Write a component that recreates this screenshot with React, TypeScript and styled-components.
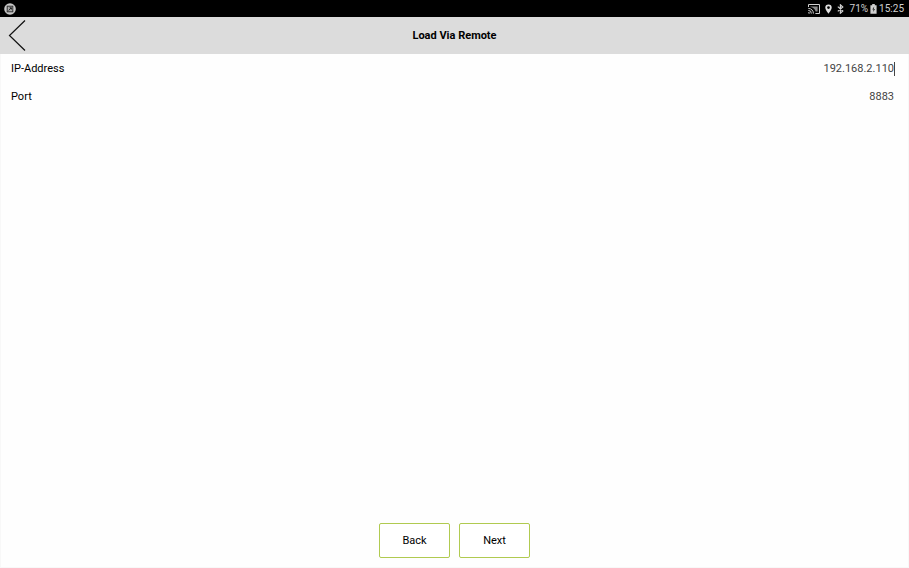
import React, { useState } from 'react';
import styled, { createGlobalStyle } from 'styled-components';

const GlobalStyle = createGlobalStyle`
  *, *::before, *::after { box-sizing: border-box; }
  body { margin: 0; background: #fefefe; font-family: Roboto, "Liberation Sans", sans-serif; color: #000; }
`;

const Screen = styled.div`
  display: flex;
  flex-direction: column;
  min-height: 100vh;
  border: solid #f8f8f8;
  border-width: 0 1px 1px;
`;

const StatusBar = styled.div`
  display: flex;
  align-items: center;
  justify-content: space-between;
  height: 17px;
  margin: 0 -1px;
  padding: 0 5px 0 4px;
  background: #000;
  color: #d0d0d0;
  font-size: 10px;
  line-height: 17px;
  svg { display: block; }
`;

const StatusGroup = styled.div`
  display: flex;
  align-items: center;
`;

const StatusIcon = styled.svg<{ $gap?: number }>`
  flex: none;
  margin-right: ${({ $gap = 0 }) => $gap}px;
`;

const StatusText = styled.span<{ $gap?: number }>`
  margin-right: ${({ $gap = 0 }) => $gap}px;
`;

const Header = styled.header`
  display: grid;
  grid-template-columns: 40px 1fr 40px;
  align-items: center;
  height: 37px;
  margin: 0 -1px;
  background: #dcdcdc;
`;

const BackArrow = styled.button`
  display: block;
  width: 36px;
  height: 37px;
  padding: 0;
  border: 0;
  background: none;
  cursor: pointer;
  svg { display: block; }
`;

const Title = styled.h1`
  margin: 0;
  font-size: 11px;
  line-height: 16px;
  font-weight: 700;
  text-align: center;
  color: #000;
`;

const Form = styled.form`
  display: flex;
  flex: 1;
  flex-direction: column;
  padding-top: 1px;
`;

const Field = styled.div`
  display: flex;
  align-items: center;
  height: 28px;
  padding: 0 13px 0 10px;
`;

const Label = styled.label`
  font-size: 11px;
  line-height: 16px;
`;

const Input = styled.input`
  flex: 1;
  min-width: 0;
  height: 20px;
  padding: 0;
  border: 0;
  outline: none;
  background: none;
  color: #444;
  font: 11px/20px Roboto, "Liberation Sans", sans-serif;
  text-align: right;
`;

const Caret = styled.span<{ $visible: boolean }>`
  width: 1px;
  height: 14px;
  background: ${({ $visible }) => ($visible ? '#444' : 'transparent')};
`;

const Actions = styled.footer`
  display: flex;
  justify-content: center;
  gap: 9px;
  margin-top: auto;
  padding-bottom: 9px;
`;

const ActionButton = styled.button`
  width: 71px;
  height: 35px;
  padding: 0;
  border: 1px solid #b0ca50;
  border-radius: 2px;
  background: #fff;
  color: #000;
  font: 11px/17px Roboto, "Liberation Sans", sans-serif;
  cursor: pointer;
`;

function AppBadge() {
  return (
    <StatusIcon width="12" height="12" viewBox="0 0 12 12" aria-hidden="true">
      <circle cx="6" cy="6" r="5.8" fill="#c8c8c8" />
      <rect x="3.2" y="3.2" width="5.6" height="5.6" fill="#aaa" stroke="#333" strokeWidth="1" />
      <path d="M4.7 7.5 7.2 4.8M5.6 4.8h1.8v1.7" fill="none" stroke="#222" strokeWidth="1" />
    </StatusIcon>
  );
}

function CastIcon() {
  return (
    <StatusIcon $gap={5} width="12" height="10" viewBox="0 0 12 10" aria-hidden="true">
      <path d="M.5 3V.5h11v9H7.4" fill="none" stroke="#d0d0d0" strokeWidth="1" />
      <path d="M2.4 2.4h7.2v5.2H7.6C7 5 5.2 3.3 2.4 3z" fill="#8c8c8c" />
      <path d="M.3 4.4A5 5 0 0 1 5.4 9.6M.3 6.4a3 3 0 0 1 3 3.2" fill="none" stroke="#d0d0d0" strokeWidth="1" />
      <path d="M.3 8v1.6H2A1.6 1.6 0 0 0 .3 8z" fill="#d0d0d0" />
    </StatusIcon>
  );
}

function PinIcon() {
  return (
    <StatusIcon $gap={5} width="7" height="10" viewBox="0 0 7 10" aria-hidden="true">
      <path
        d="M3.5.4A3.2 3.2 0 0 0 .3 3.6C.3 6 3.5 9.8 3.5 9.8S6.7 6 6.7 3.6A3.2 3.2 0 0 0 3.5.4zm0 1.8a1.4 1.4 0 1 1 0 2.8 1.4 1.4 0 0 1 0-2.8z"
        fill="#e0e0e0"
        fillRule="evenodd"
      />
    </StatusIcon>
  );
}

function BluetoothIcon() {
  return (
    <StatusIcon $gap={6} width="7" height="10" viewBox="0 0 7 10" aria-hidden="true">
      <path d="M.8 2.6 5.8 7 3.4 9.2V.8l2.4 2.2L.8 7.4" fill="none" stroke="#d0d0d0" strokeWidth="1.2" />
    </StatusIcon>
  );
}

function BatteryIcon() {
  return (
    <StatusIcon $gap={2} width="7" height="10" viewBox="0 0 7 10" aria-hidden="true">
      <path d="M2.2 0h2.6v1.2h1.8v8.6H.4V1.2h1.8z" fill="#d0d0d0" />
      <path d="M4.2 2.6 2.2 5.6h1.2L3.2 8l1.9-3H3.9z" fill="#333" />
    </StatusIcon>
  );
}

export default function App() {
  const [address, setAddress] = useState('192.168.2.110');
  const [port, setPort] = useState('8883');

  return (
    <Screen>
      <GlobalStyle />
      <StatusBar>
        <AppBadge />
        <StatusGroup>
          <CastIcon />
          <PinIcon />
          <BluetoothIcon />
          <StatusText $gap={2}>71%</StatusText>
          <BatteryIcon />
          <StatusText>15:25</StatusText>
        </StatusGroup>
      </StatusBar>
      <Header>
        <BackArrow type="button" aria-label="Go back">
          <svg width="36" height="37" viewBox="0 0 36 37" aria-hidden="true">
            <path d="M25 3.5 9.5 18.5 25 33.5" fill="none" stroke="#111" strokeWidth="1.2" />
          </svg>
        </BackArrow>
        <Title>Load Via Remote</Title>
      </Header>
      <Form onSubmit={(event) => event.preventDefault()}>
        <Field>
          <Label htmlFor="address">IP-Address</Label>
          <Input id="address" value={address} onChange={(event) => setAddress(event.target.value)} />
          <Caret $visible />
        </Field>
        <Field>
          <Label htmlFor="port">Port</Label>
          <Input id="port" value={port} onChange={(event) => setPort(event.target.value)} />
          <Caret $visible={false} />
        </Field>
        <Actions>
          <ActionButton type="button">Back</ActionButton>
          <ActionButton type="submit">Next</ActionButton>
        </Actions>
      </Form>
    </Screen>
  );
}
